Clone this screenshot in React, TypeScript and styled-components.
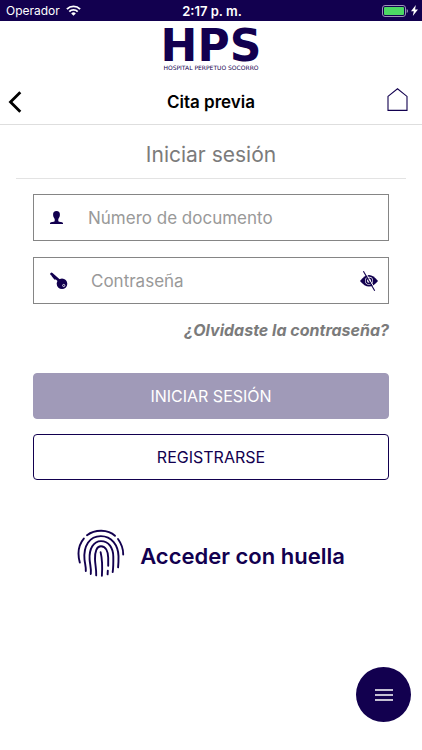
import React, { useState } from "react";
import styled, { createGlobalStyle } from "styled-components";

const navy = "#12004f";
const grey = "#7b7b7b";

const GlobalStyle = createGlobalStyle`
  * { box-sizing: border-box; }
  body {
    margin: 0;
    background: #fff;
    color: #000;
    font-family: Inter, "Liberation Sans", sans-serif;
  }
  button, input { font: inherit; }
`;

const Screen = styled.div`
  display: flex;
  flex-direction: column;
  min-height: 100vh;
`;

const StatusBar = styled.div`
  display: grid;
  grid-template-columns: 1fr auto 1fr;
  align-items: center;
  height: 21px;
  padding: 0 4px 0 6px;
  background: ${navy};
  color: #fff;
  font-size: 12px;
  line-height: 20px;
`;

const StatusGroup = styled.div<{ $end?: boolean }>`
  display: flex;
  align-items: center;
  gap: ${(p) => (p.$end ? 3 : 6)}px;
  justify-content: ${(p) => (p.$end ? "flex-end" : "flex-start")};
`;

const Clock = styled.span`
  font-size: 13px;
  font-weight: 600;
`;

const Header = styled.header`
  border-bottom: 1px solid #dedede;
`;

const Brand = styled.div`
  display: flex;
  flex-direction: column;
  align-items: center;
  padding-top: 10px;
  color: ${navy};
  font-family: "DejaVu Sans", sans-serif;
`;

const BrandName = styled.span`
  font-size: 44px;
  font-weight: 700;
  line-height: 30px;
`;

const BrandTag = styled.span`
  margin-top: 3px;
  font-size: 6px;
  line-height: 7px;
`;

const NavRow = styled.div`
  display: grid;
  grid-template-columns: 1fr auto 1fr;
  align-items: center;
  height: 53px;
  padding: 8px 8px 0;
`;

const Title = styled.h1`
  margin: 0;
  font-size: 17px;
  line-height: 24px;
  font-weight: 600;
`;

const IconButton = styled.button`
  display: flex;
  padding: 0;
  border: 0;
  background: none;
  color: inherit;
  cursor: pointer;
`;

const HomeButton = styled(IconButton)`
  justify-self: end;
  padding: 0 6px 3px;
`;

const Main = styled.main`
  display: flex;
  flex-direction: column;
  padding: 0 16px;
`;

const Heading = styled.h2`
  margin: 0;
  padding: 16px 0 10px;
  border-bottom: 1px solid #e3e3e3;
  color: ${grey};
  font-size: 21px;
  line-height: 27px;
  font-weight: 400;
  text-align: center;
`;

const Form = styled.form`
  display: flex;
  flex-direction: column;
  gap: 16px;
  padding: 15px 17px 0;
`;

const Field = styled.label<{ $gap: number }>`
  display: flex;
  align-items: center;
  gap: ${(p) => p.$gap}px;
  height: 47px;
  padding: 0 10px 0 16px;
  border: 1px solid #858585;
  color: ${navy};
`;

const TextInput = styled.input`
  flex: 1;
  min-width: 0;
  height: 100%;
  padding: 0;
  border: 0;
  outline: 0;
  background: none;
  color: #222;
  font-size: 17px;
  &::placeholder { color: #999; opacity: 1; }
`;

const ForgotLink = styled.a`
  align-self: flex-end;
  color: ${grey};
  font-size: 16px;
  line-height: 20px;
  font-style: italic;
  font-weight: 700;
  text-decoration: none;
`;

const Actions = styled.div`
  display: flex;
  flex-direction: column;
  gap: 15px;
  padding-top: 17px;
`;

const ActionButton = styled.button<{ $filled?: boolean }>`
  height: 46px;
  padding: 0;
  border: 1px solid ${(p) => (p.$filled ? "#a09ab8" : navy)};
  border-radius: 4px;
  background: ${(p) => (p.$filled ? "#a09ab8" : "#fff")};
  color: ${(p) => (p.$filled ? "#fff" : navy)};
  font-size: 16px;
  cursor: pointer;
`;

const TouchButton = styled.button`
  display: flex;
  align-items: flex-end;
  align-self: center;
  gap: 15px;
  margin-top: 49px;
  padding: 0;
  border: 0;
  background: none;
  color: ${navy};
  font-size: 22px;
  line-height: 42px;
  font-weight: 600;
  cursor: pointer;
`;

const MenuButton = styled.button`
  position: fixed;
  right: 11px;
  bottom: 28px;
  display: grid;
  place-items: center;
  width: 55px;
  height: 55px;
  padding: 0;
  border: 0;
  border-radius: 50%;
  background: ${navy};
  color: #fff;
  cursor: pointer;
`;

const WifiIcon = () => (
  <svg width="15" height="11" viewBox="0 0 15 11" fill="none" stroke="#fff" strokeWidth="1.9" aria-hidden="true">
    <path d="M.9 4.1a9.4 9.4 0 0 1 13.2 0" />
    <path d="M3.3 6.6a6 6 0 0 1 8.4 0" />
    <path d="M7.5 10.8 5.2 8.4a3.3 3.3 0 0 1 4.6 0z" fill="#fff" stroke="none" />
  </svg>
);

const BatteryIcon = () => (
  <svg width="26" height="12" viewBox="0 0 26 12" aria-hidden="true">
    <rect x=".5" y=".5" width="23" height="11" rx="2.5" fill="none" stroke="#9c93b9" />
    <rect x="2" y="2" width="20" height="8" rx="1" fill="#4cd964" />
    <path d="M24.7 4v4q1.3-.5 1.3-2t-1.3-2z" fill="#9c93b9" />
  </svg>
);

const BoltIcon = () => (
  <svg width="7" height="11" viewBox="0 0 7 11" fill="#fff" aria-hidden="true">
    <path d="M4.8 0 0 6.2h2.8L1.8 11 7 4.6H4.1z" />
  </svg>
);

const BackIcon = () => (
  <svg width="14" height="22" viewBox="0 0 14 22" fill="none" stroke="#000" strokeWidth="2.8" aria-hidden="true">
    <path d="M12.3 1.2 2.5 11l9.8 9.8" />
  </svg>
);

const HomeIcon = () => (
  <svg width="21" height="24" viewBox="0 0 21 24" fill="none" stroke={navy} strokeWidth="1.1" aria-hidden="true">
    <path d="M1 8.4 10.5.8 20 8.4V22.4H1z" />
  </svg>
);

const UserIcon = () => (
  <svg width="13" height="14" viewBox="0 0 13 14" fill="currentColor" aria-hidden="true">
    <path d="M6.5 0C4.2 0 3 1.3 3.1 3.5c0 2 .7 3.4 1.6 4.4v2.4c-.7.6-4.2.7-4.7 1.6V13h13v-1.1c-.5-.9-4-1-4.7-1.6V7.9c.9-1 1.6-2.4 1.6-4.4C10 1.3 8.8 0 6.5 0z" />
  </svg>
);

const KeyIcon = () => (
  <svg width="18" height="18" viewBox="0 0 18 18" aria-hidden="true">
    <path d="M1.6 1.9 9.6 9M3 3.6l2 2.6" fill="none" stroke={navy} strokeWidth="2.7" strokeLinecap="round" />
    <circle cx="12" cy="11.8" r="5.3" fill={navy} />
    <circle cx="13.7" cy="13.5" r="1.1" fill={navy} stroke="#fff" strokeWidth=".8" />
  </svg>
);

const EyeOffIcon = () => (
  <svg width="18" height="22" viewBox="0 0 18 22" fill="none" aria-hidden="true">
    <path d="M0 11q9-12 18 0-9 11-18 0z" fill={navy} />
    <circle cx="9" cy="10.8" r="4" fill="#fff" />
    <circle cx="9" cy="10.8" r="2.7" stroke={navy} strokeWidth="1.4" />
    <path d="M4.6 1.1 15.9 20.3" stroke="#fff" strokeWidth="1" />
    <path d="M3.4 1.3 14.7 20.7" stroke={navy} strokeWidth="1.1" />
  </svg>
);

const FingerprintIcon = () => (
  <svg width="48" height="48" viewBox="0 0 48 48" fill="none" stroke={navy} strokeWidth="1.9" strokeLinecap="round" aria-hidden="true">
    <path d="M10 6.2C18 .2 31 .2 38 6.8" />
    <path d="M6.8 9.6C1.4 16 .2 24 2.8 33.6" />
    <path d="M41 10c3.8 5.3 5.3 10.2 5.2 15.5" />
    <path d="M8.8 42c.3-4-.9-7.3-1.3-11.5C6.3 17 12.5 7.1 23.8 7.1c11 0 17.4 9.4 17.7 20 .1 4.5-.1 7.8-.4 11.2" />
    <path d="M13.8 45c.7-5.4-.9-9.5-1.2-14.6C12 19.8 16.5 12.1 24 12.1c7.8 0 12.2 7.1 12.3 15.4.1 5.9.1 10.7-.6 15.6" />
    <path d="M19.2 46.4c.3-6-1.1-10.7-1.2-16.2-.1-7.8 1.6-12.9 6-12.9 4.8 0 7.1 5.3 7.2 11.5v8M30.8 41.6l-.2 3.8" />
    <path d="M23.6 23.1c1.8 7.4 1.8 15.4 1.3 23.6" />
  </svg>
);

const MenuIcon = () => (
  <svg width="20" height="12" viewBox="0 0 20 12" stroke="currentColor" strokeWidth="1.5" aria-hidden="true">
    <path d="M1 1h18M1 6h18M1 11h18" />
  </svg>
);

export default function App() {
  const [visible, setVisible] = useState(false);

  return (
    <>
      <GlobalStyle />
      <Screen>
        <StatusBar>
          <StatusGroup>
            <span>Operador</span>
            <WifiIcon />
          </StatusGroup>
          <Clock>2:17 p. m.</Clock>
          <StatusGroup $end>
            <BatteryIcon />
            <BoltIcon />
          </StatusGroup>
        </StatusBar>
        <Header>
          <Brand>
            <BrandName>HPS</BrandName>
            <BrandTag>HOSPITAL PERPETUO SOCORRO</BrandTag>
          </Brand>
          <NavRow>
            <IconButton type="button" aria-label="Volver"><BackIcon /></IconButton>
            <Title>Cita previa</Title>
            <HomeButton type="button" aria-label="Inicio"><HomeIcon /></HomeButton>
          </NavRow>
        </Header>
        <Main>
          <Heading>Iniciar sesión</Heading>
          <Form onSubmit={(e) => e.preventDefault()}>
            <Field $gap={25}>
              <UserIcon />
              <TextInput type="text" placeholder="Número de documento" aria-label="Número de documento" />
            </Field>
            <Field $gap={23}>
              <KeyIcon />
              <TextInput type={visible ? "text" : "password"} placeholder="Contraseña" aria-label="Contraseña" />
              <IconButton type="button" aria-label="Mostrar contraseña" onClick={() => setVisible(!visible)}>
                <EyeOffIcon />
              </IconButton>
            </Field>
            <ForgotLink href="#recuperar">¿Olvidaste la contraseña?</ForgotLink>
            <Actions>
              <ActionButton type="submit" $filled>INICIAR SESIÓN</ActionButton>
              <ActionButton type="button">REGISTRARSE</ActionButton>
            </Actions>
          </Form>
          <TouchButton type="button">
            <FingerprintIcon />
            Acceder con huella
          </TouchButton>
        </Main>
        <MenuButton type="button" aria-label="Menú"><MenuIcon /></MenuButton>
      </Screen>
    </>
  );
}
